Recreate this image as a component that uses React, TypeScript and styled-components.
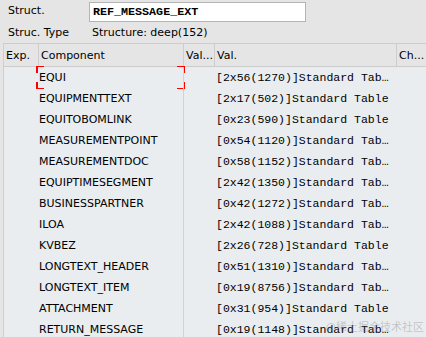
import { createGlobalStyle, styled } from "styled-components";

const GlobalStyle = createGlobalStyle`
  html, body {
    margin: 0;
    padding: 0;
    background: #e5e5e5;
    overflow: hidden;
  }
  body {
    font-family: "DejaVu Sans", Tahoma, sans-serif;
    font-size: 11px;
    color: #000;
  }
`;

const Screen = styled.div`
  position: relative;
  width: 426px;
  height: 337px;
  overflow: hidden;
  background: #e5e5e5;
`;

const FormRow = styled.div<{ h: number }>`
  display: flex;
  align-items: center;
  height: ${p => p.h}px;
`;

const Label = styled.div`
  width: 81px;
  margin-left: 8px;
  line-height: 14px;
`;

const InputBox = styled.div`
  box-sizing: border-box;
  width: 217px;
  height: 20px;
  margin-top: 1px;
  padding-left: 3px;
  display: flex;
  align-items: center;
  background: #fff;
  border: 1px solid #b4b4b4;
  font-family: "Liberation Mono", "Courier New", monospace;
  font-size: 11.7px;
  font-weight: 600;
`;

const Value = styled.div`
  margin-left: 3px;
`;

const Table = styled.div`
  margin-left: 3px;
  border-top: 1px solid #cccccc;
  border-left: 1px solid #cfcfcf;
`;

const Row = styled.div<{ header?: boolean }>`
  display: grid;
  grid-template-columns: 34px 145px 31px 182px 1fr;
  height: ${p => (p.header ? 22 : 21)}px;
  background: ${p => (p.header ? "#e5e5e5" : "#e9edf0")};
  border-bottom: ${p => (p.header ? "1px solid #cccccc" : "none")};
`;

const HeadCell = styled.div<{ sep?: boolean }>`
  display: flex;
  align-items: center;
  padding-left: 2px;
  border-left: ${p => (p.sep ? "1px solid #cdcdcd" : "none")};
  white-space: nowrap;
  overflow: hidden;
`;

const Cell = styled.div<{ sep?: boolean; mono?: boolean }>`
  position: relative;
  display: flex;
  align-items: center;
  min-width: 0;
  padding-left: ${p => (p.mono ? 2 : 1)}px;
  padding-right: ${p => (p.mono ? 4 : 0)}px;
  border-left: ${p => (p.sep ? "1px solid #d2d2d2" : "none")};
  font-family: ${p =>
    p.mono ? `"Liberation Mono", "Courier New", monospace` : "inherit"};
  font-size: ${p => (p.mono ? "11.5px" : "11px")};
`;

const Clip = styled.span`
  display: block;
  width: 100%;
  white-space: nowrap;
  overflow: hidden;
  text-overflow: ellipsis;
`;

const Corner = styled.span<{ v: "top" | "bottom"; h: "left" | "right" }>`
  position: absolute;
  ${p => p.v}: -1px;
  ${p => p.h}: -2px;
  width: 6px;
  height: 6px;
  border-color: #f00;
  border-style: solid;
  border-width: 0;
  ${p => `border-${p.v}-width: 1.5px; border-${p.h}-width: 2px;`}
`;

const Watermark = styled.div`
  position: absolute;
  right: 2px;
  bottom: 3px;
  font-family: "Noto Sans CJK SC", sans-serif;
  font-size: 11px;
  color: rgba(120, 120, 120, 0.35);
  pointer-events: none;
`;

const rows: [string, string][] = [
  ["EQUI", "[2x56(1270)]Standard Table"],
  ["EQUIPMENTTEXT", "[2x17(502)]Standard Table"],
  ["EQUITOBOMLINK", "[0x23(590)]Standard Table"],
  ["MEASUREMENTPOINT", "[0x54(1120)]Standard Table"],
  ["MEASUREMENTDOC", "[0x58(1152)]Standard Table"],
  ["EQUIPTIMESEGMENT", "[2x42(1350)]Standard Table"],
  ["BUSINESSPARTNER", "[0x42(1272)]Standard Table"],
  ["ILOA", "[2x42(1088)]Standard Table"],
  ["KVBEZ", "[2x26(728)]Standard Table"],
  ["LONGTEXT_HEADER", "[0x51(1310)]Standard Table"],
  ["LONGTEXT_ITEM", "[0x19(8756)]Standard Table"],
  ["ATTACHMENT", "[0x31(954)]Standard Table"],
  ["RETURN_MESSAGE", "[0x19(1148)]Standard Table"],
];

function App() {
  return (
    <Screen>
      <GlobalStyle />
      <FormRow h={22}>
        <Label>Struct.</Label>
        <InputBox>REF_MESSAGE_EXT</InputBox>
      </FormRow>
      <FormRow h={21}>
        <Label>Struc. Type</Label>
        <Value>Structure: deep(152)</Value>
      </FormRow>
      <Table>
        <Row header>
          <HeadCell>Exp.</HeadCell>
          <HeadCell sep>Component</HeadCell>
          <HeadCell sep>Val...</HeadCell>
          <HeadCell sep>Val.</HeadCell>
          <HeadCell sep>Ch...</HeadCell>
        </Row>
        {rows.map(([name, val], i) => (
          <Row key={name}>
            <Cell />
            <Cell>
              <Clip>{name}</Clip>
              {i === 0 && (
                <>
                  <Corner v="top" h="left" />
                  <Corner v="bottom" h="left" />
                  <Corner v="top" h="right" />
                  <Corner v="bottom" h="right" />
                </>
              )}
            </Cell>
            <Cell sep />
            <Cell mono>
              <Clip>{val}</Clip>
            </Cell>
            <Cell />
          </Row>
        ))}
      </Table>
      <Watermark>@稀土掘金技术社区</Watermark>
    </Screen>
  );
}

export default App;
